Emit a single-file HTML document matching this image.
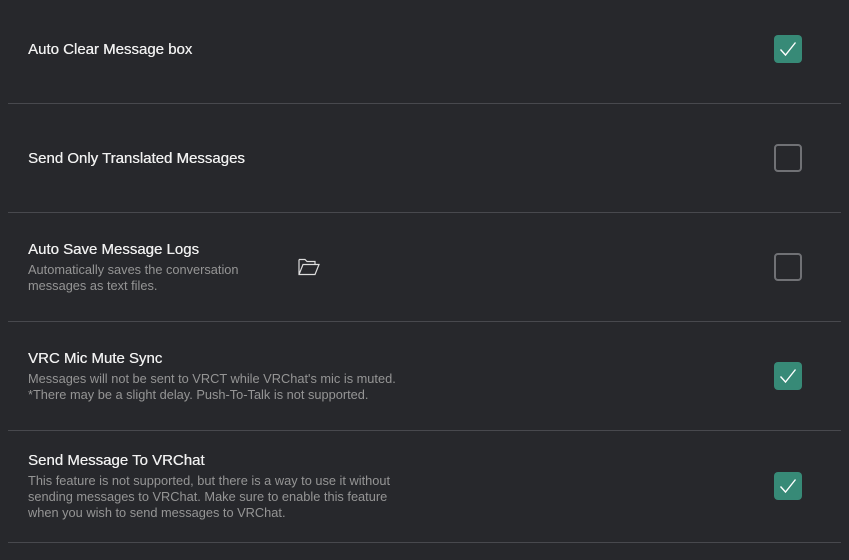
<!DOCTYPE html>
<html><head><style>
body{margin:0;width:849px;height:560px;background:#27282c;font-family:"Liberation Sans",sans-serif;position:relative;overflow:hidden}
.sep{position:absolute;left:8px;width:833px;height:1px;background:#48494e}
.t{position:absolute;left:28px;color:#f0f0f0;font-size:15px;font-weight:normal;text-shadow:0.3px 0 0 #f0f0f0}
.d{position:absolute;left:28px;color:#959595;font-size:12.8px;line-height:16px}
.cb{position:absolute;left:774px;width:28px;height:28px;box-sizing:border-box;border-radius:4px}
.on{background:#378a77}
.off{border:2px solid #707175}
</style></head><body>
<div class="t" style="top:41px">Auto Clear Message box</div>
<div class="cb on" style="top:35px"><svg width="28" height="28"><path d="M6.5 14.5l5 5.5L21.5 7.5" stroke="#fff" stroke-width="1.4" fill="none"/></svg></div>
<div class="sep" style="top:103px"></div>
<div class="t" style="top:150px">Send Only Translated Messages</div>
<div class="cb off" style="top:144px"></div>
<div class="sep" style="top:212px"></div>
<div class="t" style="top:241px">Auto Save Message Logs</div>
<div class="d" style="top:262px">Automatically saves the conversation<br>messages as text files.</div>
<svg style="position:absolute;left:297px;top:257px" width="26" height="20"><path d="M2 2.5h6l2 2h8v3M2 2.5v15h16l4-10H6l-4 10" stroke="#ddd" stroke-width="1.2" fill="none"/></svg>
<div class="cb off" style="top:253px"></div>
<div class="sep" style="top:321px"></div>
<div class="t" style="top:350px">VRC Mic Mute Sync</div>
<div class="d" style="top:371px">Messages will not be sent to VRCT while VRChat's mic is muted.<br>*There may be a slight delay. Push-To-Talk is not supported.</div>
<div class="cb on" style="top:362px"><svg width="28" height="28"><path d="M6.5 14.5l5 5.5L21.5 7.5" stroke="#fff" stroke-width="1.4" fill="none"/></svg></div>
<div class="sep" style="top:430px"></div>
<div class="t" style="top:452px">Send Message To VRChat</div>
<div class="d" style="top:473px">This feature is not supported, but there is a way to use it without<br>sending messages to VRChat. Make sure to enable this feature<br>when you wish to send messages to VRChat.</div>
<div class="cb on" style="top:472px"><svg width="28" height="28"><path d="M6.5 14.5l5 5.5L21.5 7.5" stroke="#fff" stroke-width="1.4" fill="none"/></svg></div>
<div class="sep" style="top:542px"></div>
</body></html>
